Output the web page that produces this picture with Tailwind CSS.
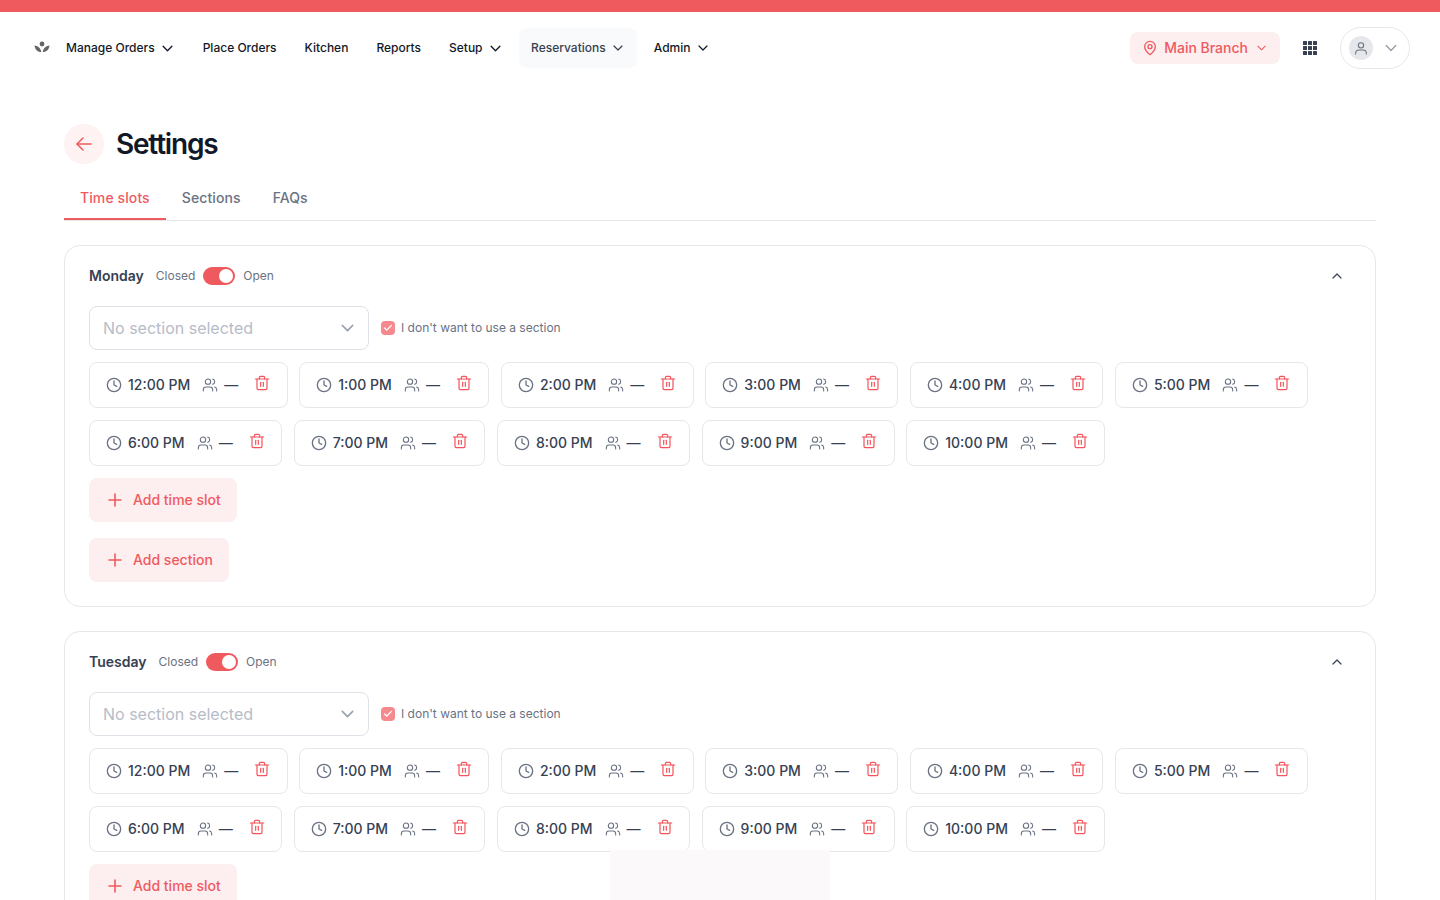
<!DOCTYPE html>
<html lang="en">
<head>
<meta charset="utf-8">
<title>Settings</title>
<script src="https://cdn.jsdelivr.net/npm/@tailwindcss/browser@4"></script>
</head>
<body class="bg-white font-['Inter',sans-serif] text-[#1f2937] h-[900px] overflow-hidden relative">
<svg class="hidden">
  <symbol id="chev" viewBox="0 0 10 6" fill="none" stroke="currentColor" stroke-width="1.2" stroke-linecap="round" stroke-linejoin="round"><path d="m1 1 4 4 4-4"/></symbol>
  <symbol id="clock" viewBox="0 0 24 24" fill="none" stroke="currentColor" stroke-width="2" stroke-linecap="round" stroke-linejoin="round"><circle cx="12" cy="12" r="10"/><path d="M12 6v6l4 2"/></symbol>
  <symbol id="users" viewBox="0 0 24 24" fill="none" stroke="currentColor" stroke-width="1.6" stroke-linecap="round" stroke-linejoin="round"><path d="M16 21v-2a4 4 0 0 0-4-4H6a4 4 0 0 0-4 4v2"/><circle cx="9" cy="7" r="4"/><path d="M22 21v-2a4 4 0 0 0-3-3.87"/><path d="M16 3.13a4 4 0 0 1 0 7.75"/></symbol>
  <symbol id="trash" viewBox="0 0 24 24" fill="none" stroke="currentColor" stroke-width="1.8" stroke-linecap="round" stroke-linejoin="round"><path d="M2 6h20"/><path d="M4.500 6v14a2 2 0 0 0 2 2h11a2 2 0 0 0 2-2V6"/><path d="M8 6V4a2 2 0 0 1 2-2h4a2 2 0 0 1 2 2v2"/><path d="M10 11v6"/><path d="M14 11v6"/></symbol>
  <symbol id="plus" viewBox="0 0 14 14" fill="none" stroke="currentColor" stroke-width="1.6" stroke-linecap="round"><path d="M1 7h12M7 1v12"/></symbol>
</svg>

<div class="h-3 bg-[#ef5a5f]"></div>

<header class="h-[72px] flex items-center pl-8 pr-[30px]">
  <svg class="w-5 h-5 text-[#666666]" viewBox="0 0 20 20" fill="currentColor"><circle cx="10" cy="6" r="2.400"/><path d="M2.500 7.500c3 .3 6 2 6.800 6.500-3.600.2-6.200-2.200-6.800-6.500Z"/><path d="M17.500 7.500c-3 .3-6 2-6.800 6.500 3.600.2 6.200-2.200 6.800-6.500Z"/></svg>
  <nav class="flex items-center gap-1 ml-[2px] text-[12px] font-medium text-[#111827]">
    <a class="flex items-center gap-[7px] h-10 px-3">Manage Orders <svg class="w-[11px] h-[7px]"><use href="#chev"/></svg></a>
    <a class="flex items-center h-10 px-3 ml-[2px]">Place Orders</a>
    <a class="flex items-center h-10 px-3">Kitchen</a>
    <a class="flex items-center h-10 px-3">Reports</a>
    <a class="flex items-center gap-[7px] h-10 px-3">Setup <svg class="w-[11px] h-[7px]"><use href="#chev"/></svg></a>
    <a class="flex items-center gap-[7px] h-10 pl-3 pr-[14px] ml-[2.5px] rounded-lg bg-[#f9fafb] text-[#374151]">Reservations <svg class="w-[10px] h-[6px]"><use href="#chev"/></svg></a>
    <a class="flex items-center gap-2 h-10 px-3 ml-[1px]">Admin <svg class="w-[10px] h-[6px]"><use href="#chev"/></svg></a>
  </nav>
  <div class="ml-auto flex items-center">
    <button class="flex items-center h-8 pl-3 pr-[14px] rounded-lg bg-[#fdeeef] text-[#ef5a5f] text-sm font-medium">
      <svg class="w-4 h-4 mr-[6px]" viewBox="0 0 24 24" fill="none" stroke="currentColor" stroke-width="2" stroke-linecap="round" stroke-linejoin="round"><path d="M20 10c0 5-5.500 10-8 12-2.500-2-8-7-8-12a8 8 0 0 1 16 0Z"/><circle cx="12" cy="10" r="3"/></svg>
      Main Branch
      <svg class="w-[9px] h-[6px] ml-[9px]"><use href="#chev"/></svg>
    </button>
    <svg class="w-[14px] h-[14px] ml-[23px] text-[#374151]" viewBox="0 0 14 14" fill="currentColor"><rect width="4" height="4" rx=".5"/><rect x="5" width="4" height="4" rx=".5"/><rect x="10" width="4" height="4" rx=".5"/><rect y="5" width="4" height="4" rx=".5"/><rect x="5" y="5" width="4" height="4" rx=".5"/><rect x="10" y="5" width="4" height="4" rx=".5"/><rect y="10" width="4" height="4" rx=".5"/><rect x="5" y="10" width="4" height="4" rx=".5"/><rect x="10" y="10" width="4" height="4" rx=".5"/></svg>
    <button class="ml-[23px] flex items-center w-[70px] h-[42px] pl-2 rounded-full border border-gray-200">
      <span class="w-6 h-6 rounded-full bg-gray-200 flex items-center justify-center text-gray-500">
        <svg class="w-4 h-4" viewBox="0 0 24 24" fill="none" stroke="currentColor" stroke-width="1.6" stroke-linecap="round"><circle cx="12" cy="8" r="4"/><path d="M4 21v-1a5 5 0 0 1 5-5h6a5 5 0 0 1 5 5v1"/></svg>
      </span>
      <svg class="w-3 h-[8px] ml-3 text-gray-400"><use href="#chev"/></svg>
    </button>
  </div>
</header>

<main class="px-16 pt-10">
  <div class="flex items-center gap-3 h-10">
    <span class="w-10 h-10 rounded-full bg-[#fef2f2] flex items-center justify-center text-[#ef5a5f]">
      <svg class="w-6 h-6" viewBox="0 0 24 24" fill="none" stroke="currentColor" stroke-width="1.500" stroke-linecap="round" stroke-linejoin="round"><path d="M19 12H5"/><path d="m11 18-6-6 6-6"/></svg>
    </span>
    <h1 class="text-[28px] font-semibold tracking-[-1.2px] text-[#111827]">Settings</h1>
  </div>

  <div class="mt-3 flex h-[45px] border-b border-gray-200 text-sm font-medium text-gray-500 tracking-[0.1px]">
    <a class="flex items-center px-4 h-[44px] border-y-2 border-t-transparent border-b-[#ef5a5f] text-[#ef5a5f]">Time slots</a>
    <a class="flex items-center px-4 h-[44px]">Sections</a>
    <a class="flex items-center px-4 h-[44px]">FAQs</a>
  </div>

  <section class="mt-6 rounded-2xl border border-gray-200 p-6">
    <div class="flex items-center h-3 pr-[6px]">
      <h2 class="text-sm font-semibold text-gray-700">Monday</h2>
      <span class="ml-3 text-xs text-gray-500">Closed</span>
      <span class="ml-2 w-8 h-[18px] rounded-full bg-[#ef5a5f] flex items-center justify-end pr-[2px]"><span class="w-[14px] h-[14px] rounded-full bg-white"></span></span>
      <span class="ml-2 text-xs text-gray-500">Open</span>
      <svg class="ml-auto w-[10px] h-[6px] mr-[3px] rotate-180 text-gray-700"><use href="#chev"/></svg>
    </div>
    <div class="mt-6 flex items-center gap-3">
      <div class="w-[280px] h-11 rounded-lg border border-[#dfe2e8] pl-[13px] pr-[14px] flex items-center justify-between text-base text-[#b6bcc8]"><span>No section selected</span><svg class="w-[13px] h-[8px] text-gray-400"><use href="#chev"/></svg></div>
      <span class="w-[14px] h-[14px] rounded bg-[#f58a8e] flex items-center justify-center text-white"><svg class="w-[10px] h-[10px]" viewBox="0 0 24 24" fill="none" stroke="currentColor" stroke-width="3" stroke-linecap="round" stroke-linejoin="round"><path d="M20 6 9 17l-5-5"/></svg></span>
      <span class="-ml-[6px] text-xs text-gray-500">I don't want to use a section</span>
    </div>
    <div class="mt-3 flex flex-col gap-3 text-sm font-medium text-gray-700">
      <div class="flex gap-[11.5px]">
        <div class="h-[46px] pl-4 pr-[16.5px] rounded-lg border border-gray-200 flex items-center"><svg class="w-4 h-4 text-gray-500 mr-[6px]"><use href="#clock"/></svg>12:00 PM<svg class="w-4 h-4 ml-3 text-gray-500"><use href="#users"/></svg><span class="ml-[6px]">—</span><svg class="w-4 h-4 ml-4 -mt-[5px] text-[#f4535a]"><use href="#trash"/></svg></div>
        <div class="h-[46px] pl-4 pr-[16.5px] rounded-lg border border-gray-200 flex items-center"><svg class="w-4 h-4 text-gray-500 mr-[6px]"><use href="#clock"/></svg>1:00 PM<svg class="w-4 h-4 ml-3 text-gray-500"><use href="#users"/></svg><span class="ml-[6px]">—</span><svg class="w-4 h-4 ml-4 -mt-[5px] text-[#f4535a]"><use href="#trash"/></svg></div>
        <div class="h-[46px] pl-4 pr-[16.5px] rounded-lg border border-gray-200 flex items-center"><svg class="w-4 h-4 text-gray-500 mr-[6px]"><use href="#clock"/></svg>2:00 PM<svg class="w-4 h-4 ml-3 text-gray-500"><use href="#users"/></svg><span class="ml-[6px]">—</span><svg class="w-4 h-4 ml-4 -mt-[5px] text-[#f4535a]"><use href="#trash"/></svg></div>
        <div class="h-[46px] pl-4 pr-[16.5px] rounded-lg border border-gray-200 flex items-center"><svg class="w-4 h-4 text-gray-500 mr-[6px]"><use href="#clock"/></svg>3:00 PM<svg class="w-4 h-4 ml-3 text-gray-500"><use href="#users"/></svg><span class="ml-[6px]">—</span><svg class="w-4 h-4 ml-4 -mt-[5px] text-[#f4535a]"><use href="#trash"/></svg></div>
        <div class="h-[46px] pl-4 pr-[16.5px] rounded-lg border border-gray-200 flex items-center"><svg class="w-4 h-4 text-gray-500 mr-[6px]"><use href="#clock"/></svg>4:00 PM<svg class="w-4 h-4 ml-3 text-gray-500"><use href="#users"/></svg><span class="ml-[6px]">—</span><svg class="w-4 h-4 ml-4 -mt-[5px] text-[#f4535a]"><use href="#trash"/></svg></div>
        <div class="h-[46px] pl-4 pr-[16.5px] rounded-lg border border-gray-200 flex items-center"><svg class="w-4 h-4 text-gray-500 mr-[6px]"><use href="#clock"/></svg>5:00 PM<svg class="w-4 h-4 ml-3 text-gray-500"><use href="#users"/></svg><span class="ml-[6px]">—</span><svg class="w-4 h-4 ml-4 -mt-[5px] text-[#f4535a]"><use href="#trash"/></svg></div>
      </div>
      <div class="flex gap-[11.5px]">
        <div class="h-[46px] pl-4 pr-[16.5px] rounded-lg border border-gray-200 flex items-center"><svg class="w-4 h-4 text-gray-500 mr-[6px]"><use href="#clock"/></svg>6:00 PM<svg class="w-4 h-4 ml-3 text-gray-500"><use href="#users"/></svg><span class="ml-[6px]">—</span><svg class="w-4 h-4 ml-4 -mt-[5px] text-[#f4535a]"><use href="#trash"/></svg></div>
        <div class="h-[46px] pl-4 pr-[16.5px] rounded-lg border border-gray-200 flex items-center"><svg class="w-4 h-4 text-gray-500 mr-[6px]"><use href="#clock"/></svg>7:00 PM<svg class="w-4 h-4 ml-3 text-gray-500"><use href="#users"/></svg><span class="ml-[6px]">—</span><svg class="w-4 h-4 ml-4 -mt-[5px] text-[#f4535a]"><use href="#trash"/></svg></div>
        <div class="h-[46px] pl-4 pr-[16.5px] rounded-lg border border-gray-200 flex items-center"><svg class="w-4 h-4 text-gray-500 mr-[6px]"><use href="#clock"/></svg>8:00 PM<svg class="w-4 h-4 ml-3 text-gray-500"><use href="#users"/></svg><span class="ml-[6px]">—</span><svg class="w-4 h-4 ml-4 -mt-[5px] text-[#f4535a]"><use href="#trash"/></svg></div>
        <div class="h-[46px] pl-4 pr-[16.5px] rounded-lg border border-gray-200 flex items-center"><svg class="w-4 h-4 text-gray-500 mr-[6px]"><use href="#clock"/></svg>9:00 PM<svg class="w-4 h-4 ml-3 text-gray-500"><use href="#users"/></svg><span class="ml-[6px]">—</span><svg class="w-4 h-4 ml-4 -mt-[5px] text-[#f4535a]"><use href="#trash"/></svg></div>
        <div class="h-[46px] pl-4 pr-[16.5px] rounded-lg border border-gray-200 flex items-center"><svg class="w-4 h-4 text-gray-500 mr-[6px]"><use href="#clock"/></svg>10:00 PM<svg class="w-4 h-4 ml-3 text-gray-500"><use href="#users"/></svg><span class="ml-[6px]">—</span><svg class="w-4 h-4 ml-4 -mt-[5px] text-[#f4535a]"><use href="#trash"/></svg></div>
      </div>
    </div>
    <button class="mt-3 flex items-center h-11 pl-[19px] pr-4 gap-[11px] rounded-lg bg-[#fdeeef] text-[#ef5a5f] text-sm font-medium"><svg class="w-[14px] h-[14px]"><use href="#plus"/></svg>Add time slot</button>
    <button class="mt-4 flex items-center h-11 pl-[19px] pr-4 gap-[11px] rounded-lg bg-[#fdeeef] text-[#ef5a5f] text-sm font-medium"><svg class="w-[14px] h-[14px]"><use href="#plus"/></svg>Add section</button>
  </section>

  <section class="mt-6 rounded-2xl border border-gray-200 p-6">
    <div class="flex items-center h-3 pr-[6px]">
      <h2 class="text-sm font-semibold text-gray-700">Tuesday</h2>
      <span class="ml-3 text-xs text-gray-500">Closed</span>
      <span class="ml-2 w-8 h-[18px] rounded-full bg-[#ef5a5f] flex items-center justify-end pr-[2px]"><span class="w-[14px] h-[14px] rounded-full bg-white"></span></span>
      <span class="ml-2 text-xs text-gray-500">Open</span>
      <svg class="ml-auto w-[10px] h-[6px] mr-[3px] rotate-180 text-gray-700"><use href="#chev"/></svg>
    </div>
    <div class="mt-6 flex items-center gap-3">
      <div class="w-[280px] h-11 rounded-lg border border-[#dfe2e8] pl-[13px] pr-[14px] flex items-center justify-between text-base text-[#b6bcc8]"><span>No section selected</span><svg class="w-[13px] h-[8px] text-gray-400"><use href="#chev"/></svg></div>
      <span class="w-[14px] h-[14px] rounded bg-[#f58a8e] flex items-center justify-center text-white"><svg class="w-[10px] h-[10px]" viewBox="0 0 24 24" fill="none" stroke="currentColor" stroke-width="3" stroke-linecap="round" stroke-linejoin="round"><path d="M20 6 9 17l-5-5"/></svg></span>
      <span class="-ml-[6px] text-xs text-gray-500">I don't want to use a section</span>
    </div>
    <div class="mt-3 flex flex-col gap-3 text-sm font-medium text-gray-700">
      <div class="flex gap-[11.5px]">
        <div class="h-[46px] pl-4 pr-[16.5px] rounded-lg border border-gray-200 flex items-center"><svg class="w-4 h-4 text-gray-500 mr-[6px]"><use href="#clock"/></svg>12:00 PM<svg class="w-4 h-4 ml-3 text-gray-500"><use href="#users"/></svg><span class="ml-[6px]">—</span><svg class="w-4 h-4 ml-4 -mt-[5px] text-[#f4535a]"><use href="#trash"/></svg></div>
        <div class="h-[46px] pl-4 pr-[16.5px] rounded-lg border border-gray-200 flex items-center"><svg class="w-4 h-4 text-gray-500 mr-[6px]"><use href="#clock"/></svg>1:00 PM<svg class="w-4 h-4 ml-3 text-gray-500"><use href="#users"/></svg><span class="ml-[6px]">—</span><svg class="w-4 h-4 ml-4 -mt-[5px] text-[#f4535a]"><use href="#trash"/></svg></div>
        <div class="h-[46px] pl-4 pr-[16.5px] rounded-lg border border-gray-200 flex items-center"><svg class="w-4 h-4 text-gray-500 mr-[6px]"><use href="#clock"/></svg>2:00 PM<svg class="w-4 h-4 ml-3 text-gray-500"><use href="#users"/></svg><span class="ml-[6px]">—</span><svg class="w-4 h-4 ml-4 -mt-[5px] text-[#f4535a]"><use href="#trash"/></svg></div>
        <div class="h-[46px] pl-4 pr-[16.5px] rounded-lg border border-gray-200 flex items-center"><svg class="w-4 h-4 text-gray-500 mr-[6px]"><use href="#clock"/></svg>3:00 PM<svg class="w-4 h-4 ml-3 text-gray-500"><use href="#users"/></svg><span class="ml-[6px]">—</span><svg class="w-4 h-4 ml-4 -mt-[5px] text-[#f4535a]"><use href="#trash"/></svg></div>
        <div class="h-[46px] pl-4 pr-[16.5px] rounded-lg border border-gray-200 flex items-center"><svg class="w-4 h-4 text-gray-500 mr-[6px]"><use href="#clock"/></svg>4:00 PM<svg class="w-4 h-4 ml-3 text-gray-500"><use href="#users"/></svg><span class="ml-[6px]">—</span><svg class="w-4 h-4 ml-4 -mt-[5px] text-[#f4535a]"><use href="#trash"/></svg></div>
        <div class="h-[46px] pl-4 pr-[16.5px] rounded-lg border border-gray-200 flex items-center"><svg class="w-4 h-4 text-gray-500 mr-[6px]"><use href="#clock"/></svg>5:00 PM<svg class="w-4 h-4 ml-3 text-gray-500"><use href="#users"/></svg><span class="ml-[6px]">—</span><svg class="w-4 h-4 ml-4 -mt-[5px] text-[#f4535a]"><use href="#trash"/></svg></div>
      </div>
      <div class="flex gap-[11.5px]">
        <div class="h-[46px] pl-4 pr-[16.5px] rounded-lg border border-gray-200 flex items-center"><svg class="w-4 h-4 text-gray-500 mr-[6px]"><use href="#clock"/></svg>6:00 PM<svg class="w-4 h-4 ml-3 text-gray-500"><use href="#users"/></svg><span class="ml-[6px]">—</span><svg class="w-4 h-4 ml-4 -mt-[5px] text-[#f4535a]"><use href="#trash"/></svg></div>
        <div class="h-[46px] pl-4 pr-[16.5px] rounded-lg border border-gray-200 flex items-center"><svg class="w-4 h-4 text-gray-500 mr-[6px]"><use href="#clock"/></svg>7:00 PM<svg class="w-4 h-4 ml-3 text-gray-500"><use href="#users"/></svg><span class="ml-[6px]">—</span><svg class="w-4 h-4 ml-4 -mt-[5px] text-[#f4535a]"><use href="#trash"/></svg></div>
        <div class="h-[46px] pl-4 pr-[16.5px] rounded-lg border border-gray-200 flex items-center"><svg class="w-4 h-4 text-gray-500 mr-[6px]"><use href="#clock"/></svg>8:00 PM<svg class="w-4 h-4 ml-3 text-gray-500"><use href="#users"/></svg><span class="ml-[6px]">—</span><svg class="w-4 h-4 ml-4 -mt-[5px] text-[#f4535a]"><use href="#trash"/></svg></div>
        <div class="h-[46px] pl-4 pr-[16.5px] rounded-lg border border-gray-200 flex items-center"><svg class="w-4 h-4 text-gray-500 mr-[6px]"><use href="#clock"/></svg>9:00 PM<svg class="w-4 h-4 ml-3 text-gray-500"><use href="#users"/></svg><span class="ml-[6px]">—</span><svg class="w-4 h-4 ml-4 -mt-[5px] text-[#f4535a]"><use href="#trash"/></svg></div>
        <div class="h-[46px] pl-4 pr-[16.5px] rounded-lg border border-gray-200 flex items-center"><svg class="w-4 h-4 text-gray-500 mr-[6px]"><use href="#clock"/></svg>10:00 PM<svg class="w-4 h-4 ml-3 text-gray-500"><use href="#users"/></svg><span class="ml-[6px]">—</span><svg class="w-4 h-4 ml-4 -mt-[5px] text-[#f4535a]"><use href="#trash"/></svg></div>
      </div>
    </div>
    <button class="mt-3 flex items-center h-11 pl-[19px] pr-4 gap-[11px] rounded-lg bg-[#fdeeef] text-[#ef5a5f] text-sm font-medium"><svg class="w-[14px] h-[14px]"><use href="#plus"/></svg>Add time slot</button>
  </section>
</main>

<div class="absolute left-[610px] top-[850px] w-[220px] h-[50px] bg-[#fbf9fa]"></div>
</body>
</html>
